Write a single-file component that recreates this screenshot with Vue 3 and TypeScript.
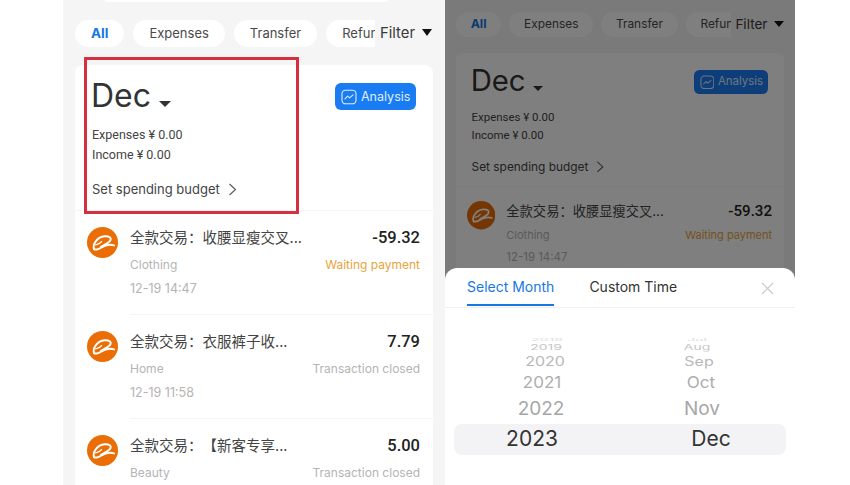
<script setup lang="ts">
interface Row { title: string; amount: string; category: string; status: string; time?: string; waiting?: boolean }
interface WheelItem { label: string; height: number; size: number; scaleY: number; dx: number; color: string }

const pills: string[] = ['All', 'Expenses', 'Transfer', 'Refund']
const rows: Row[] = [
  { title: '全款交易：收腰显瘦交叉...', amount: '-59.32', category: 'Clothing', status: 'Waiting payment', time: '12-19 14:47', waiting: true },
  { title: '全款交易：衣服裤子收...', amount: '7.79', category: 'Home', status: 'Transaction closed', time: '12-19 11:58' },
  { title: '全款交易：【新客专享...', amount: '5.00', category: 'Beauty', status: 'Transaction closed' }
]
const shape = [
  { height: 4, size: 14, scaleY: 0.25, color: '#dcdcdc' },
  { height: 9, size: 14, scaleY: 0.55, color: '#c6c6c6' },
  { height: 20, size: 16, scaleY: 0.78, color: '#b8b8b8' },
  { height: 23, size: 17, scaleY: 0.95, color: '#adadad' },
  { height: 29, size: 19, scaleY: 1, color: '#a6a6a6' },
  { height: 31, size: 21, scaleY: 1, color: '#333333' }
]
const make = (labels: string[], dx: number[]): WheelItem[] =>
  labels.map((label, i) => ({ label, dx: dx[i], ...shape[i] }))
const wheels: WheelItem[][] = [
  make(['2018', '2019', '2020', '2021', '2022', '2023'], [10, 9, 8, 5, 4, -5]),
  make(['Jul', 'Aug', 'Sep', 'Oct', 'Nov', 'Dec'], [-6, -6, -4, -2, -1, 8])
]
const itemStyle = (it: WheelItem) => ({
  height: it.height + 'px',
  lineHeight: it.height + 'px',
  fontSize: it.size + 'px',
  color: it.color,
  transform: `translateX(${it.dx}px) scaleY(${it.scaleY})`
})
</script>

<template>
  <div class="page">
    <section v-for="n in 2" :key="n" class="phone" :class="{ dim: n === 2 }">
      <div class="content">
        <div class="search"></div>
        <div class="pills">
          <span v-for="(p, i) in pills" :key="p" class="pill" :class="{ on: i === 0 }">{{ p }}</span>
          <div class="filter">Filter <i class="tri tri-f"></i></div>
        </div>
        <div class="card">
          <div class="summary">
            <div class="month-row">
              <div class="month">Dec<i class="tri tri-m"></i></div>
              <button class="analysis">
                <svg width="16" height="16" viewBox="0 0 16 16" fill="none" stroke="#fff" stroke-opacity=".85" stroke-width="1.1" stroke-linecap="round" stroke-linejoin="round">
                  <rect x="1" y="1.2" width="14" height="13.6" rx="3.6" />
                  <path d="M4 9.8 6.6 7.2l2 1.7L12 5.8" />
                </svg>
                <span class="analysis-label">Analysis</span>
              </button>
            </div>
            <p class="money first">Expenses ¥ 0.00</p>
            <p class="money">Income ¥ 0.00</p>
            <div class="budget">
              Set spending budget
              <svg width="9" height="13" viewBox="0 0 9 13" fill="none" stroke="#555" stroke-width="1.1"><path d="M1.5 1l6 5.5-6 5.5" /></svg>
            </div>
          </div>
          <div v-for="r in rows" :key="r.title" class="row">
            <svg class="logo" viewBox="0 0 32 32" fill="none" stroke="#fff" stroke-linecap="round" stroke-linejoin="round">
              <circle cx="16" cy="16" r="16" fill="#ea6d06" stroke="none" />
              <path stroke-width="2" d="M7.5 23C5 18 11 10 18 9.500c5-.3 7.500 1.500 6 4.500-1.500 2.500-6 4.500-9.500 6.500" />
              <path stroke-width="1.400" d="M9 18.500c2.300-.6 4.800-1.800 6-3.500" />
              <path stroke-width="2" d="M7.500 23c2.500 1.200 5.500-.6 9-2.800 3.500-1.800 8-2.200 11.500-1.200" />
            </svg>
            <div class="body">
              <div class="line">
                <span class="title">{{ r.title }}</span>
                <span class="amount">{{ r.amount }}</span>
              </div>
              <div class="line sub">
                <span>{{ r.category }}</span>
                <span :class="{ waiting: r.waiting }">{{ r.status }}</span>
              </div>
              <div v-if="r.time" class="line sub time">{{ r.time }}</div>
            </div>
          </div>
        </div>
      </div>

      <template v-if="n === 2">
        <div class="scrim"></div>
        <div class="sheet">
          <div class="tabs">
            <span class="tab active">Select Month</span>
            <span class="tab">Custom Time</span>
            <svg class="close" width="13" height="13" viewBox="0 0 13 13" stroke="#c9c9c9" stroke-width="1.1"><path d="M1 1l11 11M12 1 1 12" /></svg>
          </div>
          <div class="picker">
            <div class="band"></div>
            <div v-for="(w, wi) in wheels" :key="wi" class="wheel">
              <div v-for="it in w" :key="it.label" class="item" :style="itemStyle(it)">{{ it.label }}</div>
            </div>
          </div>
        </div>
      </template>
    </section>
  </div>
</template>

<style>
html, body { margin: 0; background: #fff; }
</style>

<style scoped>
.page {
  width: 850px;
  height: 485px;
  overflow: hidden;
  display: flex;
  padding-left: 63px;
  box-sizing: border-box;
  font-family: Inter, "Noto Sans CJK SC", sans-serif;
  color: #333;
}
.phone {
  position: relative;
  width: 382px;
  height: 485px;
  flex: none;
  overflow: hidden;
  background: #f5f5f5;
}
.phone.dim { width: 350px; }
.dim .content { zoom: 0.916; margin-top: -7px; width: 382px; }
.search {
  height: 2px;
  margin: 0 57px 0 42px;
  background: #fff;
  border-radius: 0 0 8px 8px;
}
.pills {
  position: relative;
  display: flex;
  gap: 9px;
  margin: 18px 0 18px;
  padding-left: 12px;
  overflow: hidden;
}
.pill {
  flex: none;
  height: 27px;
  line-height: 27px;
  padding: 0 16px;
  background: #fff;
  border-radius: 14px;
  font-size: 13px;
  color: #4a4a4a;
}
.pill.on { color: #1677e5; font-weight: 700; font-size: 13.5px; }
.filter {
  position: absolute;
  right: 0;
  top: 0;
  width: 70px;
  height: 27px;
  line-height: 27px;
  padding-left: 5px;
  box-sizing: border-box;
  background: #f5f5f5;
  font-size: 14.8px;
  color: #3a3a3a;
}
.tri { display: inline-block; width: 0; height: 0; border-style: solid; border-color: transparent; }
.tri-f { border-width: 7px 5.5px 0; border-top-color: #111; margin-left: 3px; vertical-align: 2px; }
.tri-m { border-width: 6px 6px 0; border-top-color: #333; margin-left: 8px; vertical-align: 0; }
.card {
  margin: 0 12px;
  background: #fff;
  border-radius: 8px 8px 0 0;
}
.summary {
  height: 146px;
  padding: 12px 17px 0;
  box-sizing: border-box;
  border-bottom: 1px solid #f5f5f5;
}
.month-row { display: flex; justify-content: space-between; align-items: flex-start; }
.month { font-size: 32px; line-height: 38px; margin-left: -1px; }
.analysis {
  display: flex;
  align-items: center;
  gap: 4px;
  width: 81px;
  height: 27px;
  margin: 6px 0 0;
  padding: 0 0 0 6px;
  border: 0;
  border-radius: 6px;
  background: #1a7cf2;
  color: #dfeeff;
  font: 12.5px Inter, sans-serif;
}
.analysis-label { margin-top: -1px; }
.money {
  margin: 0;
  font-family: Roboto, sans-serif;
  font-size: 12.5px;
  line-height: 20px;
  color: #444;
}
.money.first { margin-top: 10px; }
.budget {
  display: flex;
  align-items: center;
  gap: 8px;
  margin-top: 14px;
  font-size: 13px;
  line-height: 20px;
  color: #444;
}
.row {
  display: flex;
  gap: 12px;
  padding: 16px 0 0 12px;
  height: 104px;
  box-sizing: border-box;
}
.logo { width: 31px; height: 31px; flex: none; }
.body {
  flex: 1;
  padding-right: 13px;
  border-bottom: 1px solid #f5f5f5;
}
.line { display: flex; justify-content: space-between; align-items: center; }
.title { font-size: 14.5px; line-height: 22px; color: #444; text-spacing-trim: space-all; }
.amount { font-family: Roboto, sans-serif; font-size: 16.5px; font-weight: 500; line-height: 22px; color: #222; }
.sub { margin-top: 5px; height: 20px; font-size: 12px; color: #b4b4b4; }
.time { margin-top: 4px; font-size: 12.5px; }
.waiting { color: #e8a33c; }
.phone:not(.dim) .content::after {
  content: "";
  position: absolute;
  left: 21px;
  top: 57px;
  width: 215px;
  height: 157px;
  box-sizing: border-box;
  border: 3px solid #d5303f;
}
.scrim {
  position: absolute;
  inset: 0;
  background: rgba(0, 0, 0, .5);
}
.sheet {
  position: absolute;
  left: 0;
  right: 0;
  bottom: 0;
  height: 217px;
  background: #fff;
  border-radius: 12px 12px 0 0;
}
.tabs {
  position: relative;
  display: flex;
  gap: 35px;
  height: 39px;
  padding-left: 22px;
  border-bottom: 1px solid #f0f0f0;
}
.tab {
  height: 38px;
  line-height: 38px;
  font-size: 14px;
  color: #333;
  box-sizing: border-box;
}
.tab.active { color: #1677e5; border-bottom: 2px solid #1677e5; }
.close { position: absolute; right: 21px; top: 14px; }
.picker {
  position: relative;
  display: flex;
  padding: 30px 9px 0;
}
.band {
  position: absolute;
  left: 9px;
  right: 9px;
  top: 116px;
  height: 31px;
  background: #f3f3f5;
  border-radius: 8px;
}
.wheel { position: relative; flex: 1; }
.item { text-align: center; }
</style>
